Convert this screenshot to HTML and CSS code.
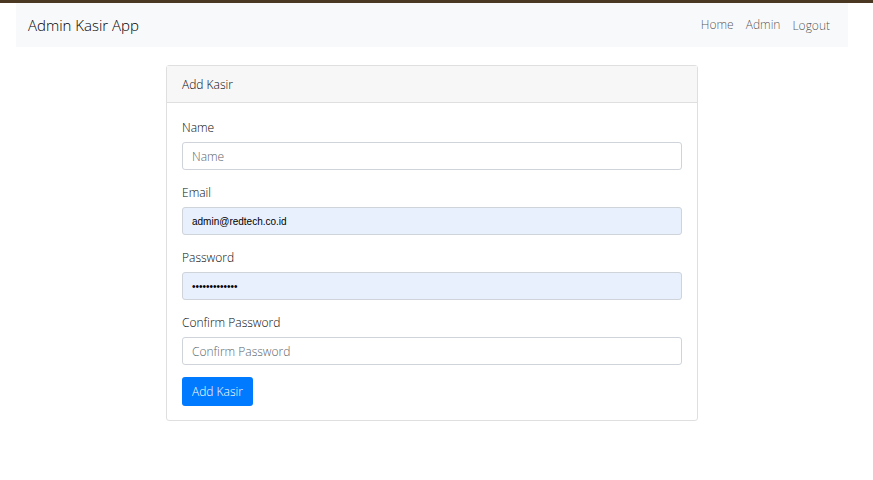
FILE: index.html
```html
<!DOCTYPE html>
<html lang="en">
<head>
  <meta charset="utf-8">
  <meta name="viewport" content="width=device-width, initial-scale=1">
  <title>Admin Kasir App</title>
  <link rel="stylesheet" href="styles.css">
</head>
<body>
  <div class="container">
    <nav class="navbar">
      <a class="brand" href="#">Admin Kasir App</a>
      <div class="nav-links">
        <a class="nav-link" href="#">Home</a>
        <a class="nav-link" href="#">Admin</a>
        <form class="logout-form">
          <button class="nav-link" type="button">Logout</button>
        </form>
      </div>
    </nav>
    <main class="card">
      <div class="card-header">Add Kasir</div>
      <form class="card-body">
        <div class="field">
          <label for="name">Name</label>
          <input class="control" id="name" type="text" placeholder="Name">
        </div>
        <div class="field">
          <label for="email">Email</label>
          <input class="control filled" id="email" type="email" value="admin@redtech.co.id">
        </div>
        <div class="field">
          <label for="password">Password</label>
          <input class="control filled" id="password" type="password" value="kasirpassword">
        </div>
        <div class="field">
          <label for="confirm">Confirm Password</label>
          <input class="control" id="confirm" type="password" placeholder="Confirm Password">
        </div>
        <button class="submit" type="button">Add Kasir</button>
      </form>
    </main>
  </div>
</body>
</html>
```

FILE: styles.css
```css
* {
  box-sizing: border-box;
}

body {
  margin: 0;
  border-top: 3px solid #4a3822;
  background: #fff;
  color: #080a0c;
  font: 350 12px/20px "Open Sans", "Noto Sans", sans-serif;
}

.container {
  margin: 0 25px 0 16px;
}

.navbar {
  display: flex;
  align-items: center;
  justify-content: space-between;
  padding: 10px 12px;
  background: #f8f9fa;
  font-weight: 300;
}

.brand {
  color: #000;
  font-size: 15px;
  line-height: 24px;
  text-decoration: none;
}

.nav-links {
  display: flex;
  align-items: center;
}

.nav-link {
  display: block;
  padding: 0 6px;
  border: 0;
  background: none;
  color: rgba(0, 0, 0, 0.7);
  font: inherit;
  text-decoration: none;
}

.logout-form {
  margin: 2px 0 0;
}

.card {
  max-width: 532px;
  margin: 18px auto;
  border: 1px solid #dfdfdf;
  border-radius: 3px;
}

.card-header {
  padding: 9px 15px 7px;
  border-bottom: 1px solid #dfdfdf;
  background: #f7f7f7;
}

.card-body {
  padding: 14px 15px;
}

.field {
  margin-bottom: 12px;
}

.field label {
  display: block;
  padding-top: 1px;
  margin-bottom: 4px;
}

.control {
  display: block;
  width: 100%;
  height: 28px;
  padding: 0 9px;
  border: 1px solid #ced4da;
  border-radius: 3px;
  background: #fff;
  color: #495057;
  font: inherit;
}

.control::placeholder {
  color: #5c646c;
  opacity: 1;
}

.filled {
  padding-top: 1px;
  background: #e8f0fe;
  color: #000;
  font: 10px "Liberation Sans", sans-serif;
}

.submit {
  height: 29px;
  padding: 0 10px;
  border: 0;
  border-radius: 3px;
  background: #007bff;
  color: #fff;
  font: inherit;
}
```
